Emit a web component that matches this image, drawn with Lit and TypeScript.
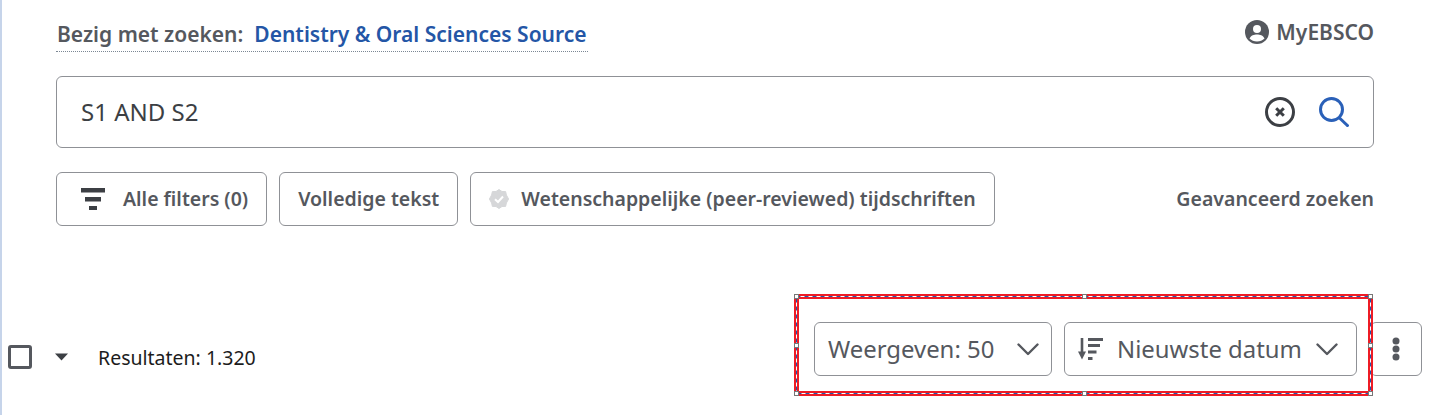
import { LitElement, html, css, svg } from "lit";
import { customElement } from "lit/decorators.js";

const chevron = svg`<path d="M1.5 1.5 L11 11 L20.5 1.5" fill="none" stroke="#55585e" stroke-width="2.4" stroke-linecap="round" stroke-linejoin="round"/>`;

@customElement("app-root")
export class AppRoot extends LitElement {
  static styles = css`
    :host {
      display: block;
      position: relative;
      width: 1431px;
      height: 415px;
      box-sizing: border-box;
      border-left: 2px solid #c6d4ea;
      background: #fff;
      overflow: hidden;
      font-family: "Noto Sans", sans-serif;
      color: #55585e;
    }
    .top {
      display: flex;
      flex-direction: column;
      padding: 19px 57px 0 54px;
    }
    .head {
      display: flex;
      justify-content: space-between;
      align-items: flex-start;
      height: 57px;
    }
    .source {
      display: flex;
      gap: 11px;
      height: 30px;
      padding: 0 1px 2px;
      align-items: center;
      font-size: 21px;
      font-weight: 600;
      line-height: 28px;
      border-bottom: 1px dotted #7b8794;
      box-sizing: content-box;
    }
    .source b { font-weight: 600; color: #2456a6; }
    .my {
      display: flex;
      align-items: center;
      gap: 7px;
      font-size: 21px;
      font-weight: 600;
      height: 26px;
    }
    .search {
      height: 72px;
      box-sizing: border-box;
      border: 1px solid #8f9196;
      border-radius: 6px;
      display: flex;
      align-items: center;
      padding: 0 24px;
      font-size: 24px;
      color: #3c3f44;
    }
    .search span { flex: 1; padding-bottom: 2px; }
    .search svg + svg { margin-left: 24px; }
    .filters {
      margin-top: 24px;
      display: flex;
      gap: 12px;
      align-items: center;
    }
    .btn {
      height: 54px;
      box-sizing: border-box;
      border: 1px solid #8f9196;
      border-radius: 6px;
      display: flex;
      align-items: center;
      background: #fff;
      font-size: 19.5px;
      font-weight: 600;
      white-space: nowrap;
    }
    .t { padding-bottom: 2px; }
    .b1 { padding: 0 18px 0 24px; gap: 18px; }
    .b2 { padding: 0 18px; }
    .b3 { padding: 0 18px; gap: 12px; }
    .adv { margin-left: auto; font-size: 19.5px; font-weight: 600; padding-bottom: 2px; }
    .results {
      position: absolute;
      left: 0;
      right: 0;
      top: 322px;
      height: 54px;
      display: flex;
      align-items: center;
    }
    .left {
      display: flex;
      align-items: center;
      margin-top: 16px;
      margin-left: 6px;
      font-size: 19.5px;
      color: #1c1c1c;
    }
    .check {
      width: 24px;
      height: 24px;
      box-sizing: border-box;
      border: 3px solid #55585e;
      border-radius: 3px;
    }
    .caret { margin-left: 23px; margin-right: 30px; }
    .right {
      margin-left: auto;
      margin-right: 9px;
      display: flex;
      align-items: center;
    }
    .sel {
      height: 54px;
      box-sizing: border-box;
      border: 1px solid #8f9196;
      border-radius: 6px;
      display: flex;
      align-items: center;
      font-size: 23.9px;
      white-space: nowrap;
    }
    .s1 { width: 238px; padding: 0 12px 0 13px; justify-content: space-between; }
    .s2 { width: 293px; margin-left: 12px; padding: 0 18px 0 13px; }
    .s2 .ic { margin-right: 14px; }
    .s2 .chev { margin-left: auto; }
    .more {
      width: 52px;
      margin-left: 13px;
      justify-content: center;
    }
    .frame {
      position: absolute;
      left: 792px;
      top: 294px;
      width: 579px;
      height: 102px;
      box-sizing: border-box;
      border: 5px solid #ee1c25;
      pointer-events: none;
    }
    .dash {
      position: absolute;
      left: -5px;
      top: -5px;
    }
    .h {
      position: absolute;
      z-index: 1;
      width: 5px;
      height: 5px;
      background: #fff;
      border: 1px solid #777;
      box-sizing: border-box;
    }
    .h.l { left: -5px; }
    .h.r { right: -5px; }
    .h.c { left: calc(50% - 2px); }
    .h.t2 { top: -5px; }
    .h.b { bottom: -5px; }
    .h.m { top: calc(50% - 2px); }
  `;

  render() {
    return html`
      <div class="top">
        <div class="head">
          <div class="source"><span>Bezig met zoeken:</span><b>Dentistry &amp; Oral Sciences Source</b></div>
          <div class="my">
            <svg width="24" height="24" viewBox="0 0 24 24">
              <circle cx="12" cy="12" r="12" fill="#55585e"/>
              <circle cx="12" cy="9" r="4" fill="#fff"/>
              <path d="M4.5 18.5 C6 15.2 9 14.5 12 14.5 C15 14.5 18 15.2 19.5 18.5 C17.5 20.6 15 21.5 12 21.5 C9 21.5 6.5 20.6 4.5 18.5 Z" fill="#fff"/>
            </svg>
            MyEBSCO
          </div>
        </div>
        <div class="search">
          <span>S1 AND S2</span>
          <svg width="30" height="30" viewBox="0 0 30 30" fill="none" stroke="#3c3f44">
            <circle cx="15" cy="15" r="13.5" stroke-width="3"/>
            <path d="M11.2 11.2 L18.8 18.8 M18.8 11.2 L11.2 18.8" stroke-width="3"/>
          </svg>
          <svg width="30" height="30" viewBox="0 0 30 30" fill="none" stroke="#2a60b8" stroke-width="3">
            <circle cx="12.5" cy="12.5" r="11"/>
            <path d="M20 20.5 L29.5 29.5"/>
          </svg>
        </div>
        <div class="filters">
          <div class="btn b1">
            <svg width="24" height="22" viewBox="0 0 24 22" fill="#3c3f44">
              <rect x="0" y="0" width="24" height="4.5"/>
              <rect x="4" y="9" width="16" height="4.5"/>
              <rect x="8" y="18" width="8" height="4"/>
            </svg>
            <span class="t">Alle filters (0)</span>
          </div>
          <div class="btn b2"><span class="t">Volledige tekst</span></div>
          <div class="btn b3">
            <svg width="20" height="20" viewBox="0 0 20 20">
              <path d="M10 0.5 L13 2.5 L16.6 2.6 L17.4 6 L19.6 10 L17.4 14 L16.6 17.4 L13 17.5 L10 19.5 L7 17.5 L3.4 17.4 L2.6 14 L0.4 10 L2.6 6 L3.4 2.6 L7 2.5 Z" fill="#d6d7d9" stroke="#d6d7d9" stroke-linejoin="round"/>
              <path d="M6 10.2 L9 13 L14 7.5" fill="none" stroke="#fff" stroke-width="2"/>
            </svg>
            <span class="t">Wetenschappelijke (peer-reviewed) tijdschriften</span>
          </div>
          <div class="adv">Geavanceerd zoeken</div>
        </div>
      </div>
      <div class="results">
        <div class="left">
          <div class="check"></div>
          <svg class="caret" width="13" height="8" viewBox="0 0 13 8"><path d="M0 0.5 H13 L6.5 7.5 Z" fill="#3c3f44"/></svg>
          <span>Resultaten: 1.320</span>
        </div>
        <div class="right">
          <div class="sel s1">
            <span class="t">Weergeven: 50</span>
            <svg class="chev" width="22" height="13" viewBox="0 0 22 13">${chevron}</svg>
          </div>
          <div class="sel s2">
            <svg class="ic" width="25" height="22" viewBox="0 0 25 22" fill="#55585e">
              <rect x="2.7" y="0" width="2.6" height="17"/>
              <path d="M0 13.5 H8 L4 21.5 Z"/>
              <rect x="10" y="0" width="15" height="3"/>
              <rect x="10" y="6" width="12" height="3"/>
              <rect x="10" y="12.5" width="8.5" height="3"/>
              <rect x="10" y="19" width="4.5" height="3"/>
            </svg>
            <span class="t">Nieuwste datum</span>
            <svg class="chev" width="22" height="13" viewBox="0 0 22 13">${chevron}</svg>
          </div>
          <div class="sel more">
            <svg width="8" height="24" viewBox="0 0 8 24" fill="#55585e">
              <circle cx="4" cy="4" r="3.5"/><circle cx="4" cy="12" r="3.5"/><circle cx="4" cy="20" r="3.5"/>
            </svg>
          </div>
        </div>
      </div>
      <div class="frame">
        <svg class="dash" width="579" height="102" viewBox="0 0 579 102" fill="none">
          <rect x="2.5" y="2.5" width="574" height="97" stroke="#fff"/>
          <rect x="2.5" y="2.5" width="574" height="97" stroke="#2456a6" stroke-dasharray="4 4"/>
        </svg>
        <i class="h l t2"></i><i class="h c t2"></i><i class="h r t2"></i>
        <i class="h l m"></i><i class="h r m"></i>
        <i class="h l b"></i><i class="h c b"></i><i class="h r b"></i>
      </div>
    `;
  }
}
